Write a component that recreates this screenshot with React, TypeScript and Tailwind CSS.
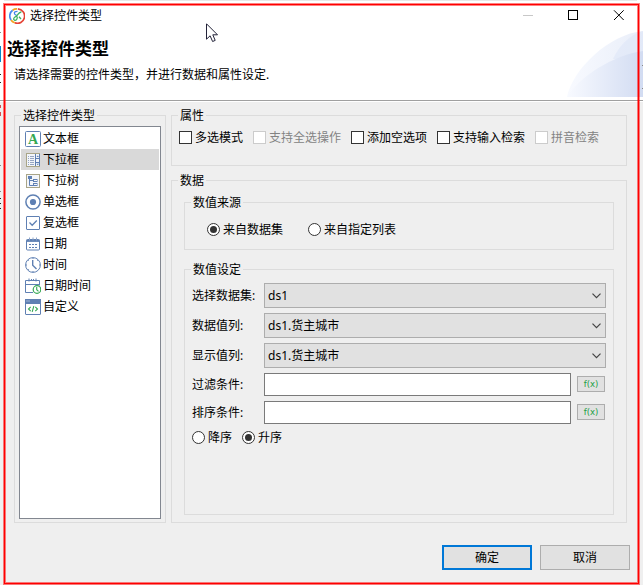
import type { ReactNode } from "react";

type Kind = "text" | "combo" | "tree" | "radio" | "check" | "date" | "time" | "datetime" | "custom";

const types: { label: string; kind: Kind }[] = [
  { label: "文本框", kind: "text" },
  { label: "下拉框", kind: "combo" },
  { label: "下拉树", kind: "tree" },
  { label: "单选框", kind: "radio" },
  { label: "复选框", kind: "check" },
  { label: "日期", kind: "date" },
  { label: "时间", kind: "time" },
  { label: "日期时间", kind: "datetime" },
  { label: "自定义", kind: "custom" },
];

const B = "#5f80b3";
const G = "#35a853";

function TypeIcon({ kind }: { kind: Kind }) {
  return (
    <svg width="16" height="16" viewBox="0 0 16 16" fill="none" stroke={B} className="shrink-0">
      {kind === "text" && (
        <>
          <rect x="0.5" y="0.5" width="15" height="15" rx="1" fill="#fff" />
          <text x="8" y="13" textAnchor="middle" fontFamily="Liberation Serif, serif" fontWeight="bold" fontSize="14" fill={G} stroke="none">A</text>
        </>
      )}
      {kind === "combo" && (
        <>
          <rect x="1.5" y="1.5" width="13" height="13" fill="#f2f5fa" stroke="#a9a588" />
          <path d="M10.5 2v12M11 6.5h4M11 10.5h4M14.5 2v12" />
          <path d="M3 4.5h1M5 4.5h4M3 6.5h1M5 6.5h4M3 8.5h1M5 8.5h4M3 10.5h1M5 10.5h4M3 12.5h1M5 12.5h4" strokeWidth="0.9" stroke="#8b9dbb" />
          <path d="M11.5 5L12.7 3.5L14 5zM11.5 11.8L12.7 13.3L14 11.8z" fill={B} stroke="none" />
        </>
      )}
      {kind === "tree" && (
        <>
          <rect x="1.5" y="1.5" width="13" height="13" fill="#f4f6fa" stroke="#a9a588" />
          <path d="M4.5 6v6.5H8M4.5 7.5H8" />
          <rect x="3.5" y="3.5" width="3" height="2" fill={B} />
          <rect x="8.5" y="6.5" width="3.5" height="2" />
          <rect x="8.5" y="10.5" width="3.5" height="2" />
        </>
      )}
      {kind === "radio" && (
        <>
          <circle cx="8" cy="8" r="7.1" strokeWidth="1.5" fill="#fff" />
          <circle cx="8" cy="8" r="3.1" fill={B} stroke="none" />
        </>
      )}
      {kind === "check" && (
        <>
          <rect x="1.5" y="1.5" width="13" height="13" rx="0.5" fill="#fff" />
          <path d="M4.5 7.5L7.2 10.3L11.8 5.5" strokeWidth="1.3" />
        </>
      )}
      {kind === "date" && (
        <>
          <rect x="1.5" y="3.5" width="13" height="10.5" rx="1" fill="#fff" />
          <path d="M1.5 4.8h13" strokeWidth="2.2" />
          <path d="M4.5 1.5v3M8 1.5v3M11.5 1.5v3" stroke="#8da4c9" />
          <path d="M4 8.5h2M7 8.5h2M10 8.5h2M4 11.5h2M7 11.5h2M10 11.5h2" strokeWidth="1.1" />
        </>
      )}
      {kind === "time" && (
        <>
          <circle cx="8" cy="8" r="7.4" fill="#fff" />
          <path d="M7.7 3v5.2L11.5 12" strokeWidth="1.4" />
          <path d="M8 1v1M8 14v1M1 8h1M14 8h1M3 3l.7.7M13 3l-.7.7M3 13l.7-.7" />
        </>
      )}
      {kind === "datetime" && (
        <>
          <path d="M8 14.5H.5v-12h14v5M.5 6.5h14" />
          <path d="M4 .5v3M11 .5v3M6.5 1v2M8.5 1v2" />
          <circle cx="12" cy="11.5" r="3.8" fill="#fff" stroke={G} strokeWidth="1.2" />
          <path d="M11.7 9v2.7l1.8 1.6" stroke={G} strokeWidth="1.1" />
        </>
      )}
      {kind === "custom" && (
        <>
          <rect x="0.5" y="0.5" width="15" height="15" rx="0.5" fill="#fff" />
          <rect x="0" y="0" width="16" height="5" fill={B} stroke="none" />
          <path d="M1.5 2h1M3.5 2h1" stroke="#dce6f5" />
          <path d="M5.7 7.8L3.5 10l2.2 2.2M10.3 7.8l2.2 2.2-2.2 2.2M8.8 7.2L7.2 12.8" stroke={G} strokeWidth="1.1" />
        </>
      )}
    </svg>
  );
}

function Group({ title, className, children }: { title: string; className: string; children: ReactNode }) {
  return (
    <fieldset className={`min-w-0 border border-[#dcdcdc] ${className}`}>
      <legend className="ml-[6px] h-[17px] px-[2px] leading-[17px]">{title}</legend>
      {children}
    </fieldset>
  );
}

function Check({ label, disabled }: { label: string; disabled?: boolean }) {
  return (
    <label className={`flex items-center gap-[3px] ${disabled ? "text-[#838383]" : ""}`}>
      <span className={`size-[13px] border bg-white ${disabled ? "border-[#cccccc]" : "border-[#333333]"}`} />
      <span className="translate-y-px">{label}</span>
    </label>
  );
}

function Radio({ label, on }: { label: string; on?: boolean }) {
  return (
    <label className="flex items-center gap-[3px]">
      <span className="flex size-[13px] items-center justify-center rounded-full border border-[#333333] bg-white">
        {on && <span className="size-[7px] rounded-full bg-[#333333]" />}
      </span>
      <span className="translate-y-px">{label}</span>
    </label>
  );
}

function SelectRow({ label, value }: { label: string; value: string }) {
  return (
    <div className="mb-[5px] flex h-[25px] items-center">
      <span className="w-[72px]">{label}</span>
      <div className="flex h-[25px] w-[342px] items-center justify-between border border-[#adadad] bg-[#e1e1e1] pl-[3px] pr-[4px]">
        <span>{value}</span>
        <svg width="9" height="6" viewBox="0 0 9 6" fill="none" stroke="#444" strokeWidth="1.2">
          <path d="M0.5 0.7L4.5 4.7L8.5 0.7" />
        </svg>
      </div>
    </div>
  );
}

function InputRow({ label }: { label: string }) {
  return (
    <div className="mb-[5px] flex h-[23px] items-center">
      <span className="w-[72px]">{label}</span>
      <div className="h-[23px] w-[307px] border border-[#7a7a7a] bg-white" />
      <div className="mb-[1px] ml-[6px] flex h-[16px] w-[28px] items-center justify-center border border-[#adadad] bg-[#e1e1e1] pt-px font-['DejaVu_Sans',sans-serif] text-[8.5px] font-medium leading-none text-[#22a045]">
        f(x)
      </div>
    </div>
  );
}

export default function App() {
  return (
    <div className="relative flex h-[587px] w-[643px] flex-col overflow-hidden bg-[#efefef] font-['Noto_Sans','Noto_Sans_CJK_SC',sans-serif] text-[12px] leading-[16px] text-black">
      <header className="relative h-[102px] border-b border-white bg-white">
        <svg width="76" height="66" viewBox="0 0 76 66" className="absolute left-[567px] top-[31px]">
          <defs>
            <linearGradient id="arc" x1="0" x2="1" y1="0" y2="0">
              <stop offset="0" stopColor="#f8faff" />
              <stop offset="1" stopColor="#e9eef9" />
            </linearGradient>
            <linearGradient id="arcLow" x1="0" x2="1" y1="0" y2="0">
              <stop offset="0" stopColor="#f8faff" />
              <stop offset="1" stopColor="#d2dcf2" />
            </linearGradient>
          </defs>
          <path d="M0 66C5 39 42 3 76 0V66Z" fill="url(#arc)" />
          <path d="M46 28C52 15 62 4 76 0V28Z" fill="#dfe7f8" opacity=".65" />
          <path d="M0 66C12 46 46 24 76 20V66Z" fill="url(#arcLow)" />
        </svg>
        <div className="flex h-[31px] items-center pl-[9px] pr-[19px]">
          <svg width="16" height="16" viewBox="0 0 16 16" fill="none" strokeWidth="1.7" className="mr-[5px]">
            <path d="M3.6 2.2A7.2 7.2 0 0 1 8 .9" stroke="#f3a323" />
            <path d="M8.8.9A7.2 7.2 0 1 1 5.8 14.8" stroke="#e54335" />
            <path d="M5.8 14.8A7.2 7.2 0 0 1 2 12" stroke="#f3a323" />
            <path d="M2 12A7.2 7.2 0 0 1 3.6 2.2" stroke="#4a8aee" />
            <path d="M8.5 3.3C4.3 3.3 4.5 6 7.5 7.4" stroke="#4285e8" strokeWidth="1.3" />
            <path d="M12.3 4C8.5 4.8 9.5 7 7 8.3S4 11.3 5.5 12.2S9 10.5 8 8.5M10 8.7l2 2.3" stroke="#40b463" strokeWidth="1.3" />
          </svg>
          <span className="flex-1">选择控件类型</span>
          <svg width="102" height="12" viewBox="0 0 102 12" fill="none" stroke="#000">
            <path d="M1 5.5h10" stroke="#c8c8c8" />
            <rect x="46.5" y="0.5" width="9" height="9" />
            <path d="M92 .3l9.7 9.7M101.7.3L92 10" />
          </svg>
        </div>
        <h1 className="pl-[7px] pt-[6px] text-[17px] font-bold leading-[23px]">选择控件类型</h1>
        <p className="pl-[14px] pt-[7px]">请选择需要的控件类型，并进行数据和属性设定.</p>
        <div className="mt-[17px] h-px bg-[#a0a0a0]" />
      </header>

      <main className="flex gap-[5px] pl-[14px] pt-[5px]">
        <Group title="选择控件类型" className="h-[416px] w-[152px]">
          <ul className="ml-[4px] mt-[2px] h-[393px] w-[142px] border border-[#828790] bg-white px-px pt-px">
            {types.map((t, i) => (
              <li key={t.label} className={`flex h-[21px] items-center gap-[2px] pl-[4px] ${i === 1 ? "bg-[#d9d9d9]" : ""}`}>
                <TypeIcon kind={t.kind} />
                {t.label}
              </li>
            ))}
          </ul>
        </Group>

        <div className="w-[456px]">
          <Group title="属性" className="h-[59px]">
            <div className="flex gap-[10px] pl-[7px] pt-[5px]">
              <Check label="多选模式" />
              <Check label="支持全选操作" disabled />
              <Check label="添加空选项" />
              <Check label="支持输入检索" />
              <Check label="拼音检索" disabled />
            </div>
          </Group>

          <Group title="数据" className="mt-[6px] h-[351px]">
            <div className="px-[12px] pt-[5px]">
              <Group title="数值来源" className="h-[56px]">
                <div className="flex gap-[25px] pl-[22px] pt-[10px]">
                  <Radio label="来自数据集" on />
                  <Radio label="来自指定列表" />
                </div>
              </Group>
              <Group title="数值设定" className="mt-[11px] h-[254px]">
                <div className="pl-[7px] pt-[5px]">
                  <SelectRow label="选择数据集:" value="ds1" />
                  <SelectRow label="数据值列:" value="ds1.货主城市" />
                  <SelectRow label="显示值列:" value="ds1.货主城市" />
                  <InputRow label="过滤条件:" />
                  <InputRow label="排序条件:" />
                  <div className="flex gap-[10px]">
                    <Radio label="降序" />
                    <Radio label="升序" on />
                  </div>
                </div>
              </Group>
            </div>
          </Group>
        </div>
      </main>

      <footer className="flex justify-end gap-[8px] pr-[13px] pt-[22px]">
        <button className="h-[25px] w-[90px] border-2 border-[#0078d7] bg-[#e1e1e1]">确定</button>
        <button className="h-[25px] w-[90px] border border-[#adadad] bg-[#e1e1e1]">取消</button>
      </footer>

      <svg width="13" height="20" viewBox="0 0 13 20" className="absolute left-[206px] top-[23px]">
        <path d="M.5.8V16.2L4.1 12.8L6.6 18.5L9.2 17.4L6.8 11.8H11.5Z" fill="#fff" stroke="#222238" />
      </svg>

      <svg width="643" height="587" viewBox="0 0 643 587" className="pointer-events-none absolute left-0 top-0">
        <path d="M0 0h643v3H0zM0 585h643v2H0z" fill="#fff" />
        <path d="M4 .5h633" stroke="#e8e8e8" />
        <path d="M.5 46v16" stroke="#0a83c6" />
        <path d="M.5 105v3M.5 112v4" stroke="#d94b50" />
        <path d="M0 32.5h1M0 165.5h1M0 191.5h1M642 65.5h1M642 88.5h1" stroke="#888" />
        <path d="M0 74.5h1M0 82.5h1M0 198.5h1M0 203.5h1M0 208.5h1" stroke="#222" />
        <rect x="4.5" y="4.5" width="634" height="579" fill="none" stroke="#ff0000" strokeOpacity=".5" strokeWidth="3" />
        <rect x="4.5" y="4.5" width="634" height="579" fill="none" stroke="#ff0000" />
      </svg>
    </div>
  );
}
